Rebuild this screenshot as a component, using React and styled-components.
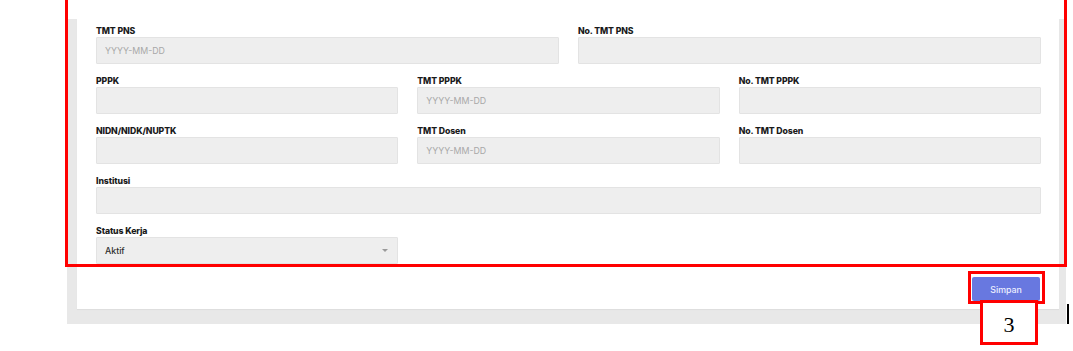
import React from "react";
import styled, { createGlobalStyle } from "styled-components";

const Global = createGlobalStyle`
  html, body { margin: 0; padding: 0; background: #ffffff; }
  body { font-family: Inter, "Open Sans", Arial, sans-serif; }
  * { box-sizing: border-box; }
`;

const Page = styled.div`
  position: relative;
  width: 1073px;
  height: 351px;
  overflow: hidden;
  padding: 19px 0 0 67px;
`;

const Frame = styled.div`
  width: 999px;
  background: #e8e8e8;
  padding: 0 7px 15px 10px;
`;

const Card = styled.div`
  background: #ffffff;
  padding: 6px 18px 8px 19px;
  box-shadow: 0 1px 1px rgba(0, 0, 0, 0.04);
`;

const Row = styled.div`
  display: grid;
  grid-template-columns: repeat(${(p) => p.$cols}, 1fr);
  column-gap: 19px;
  margin-bottom: ${(p) => (p.$last ? 12 : 11)}px;
`;

const Group = styled.div`
  display: flex;
  flex-direction: column;
`;

const Label = styled.label`
  display: block;
  font-size: 8.7px;
  font-weight: 800;
  line-height: 12px;
  color: #1a1a1a;
  letter-spacing: -0.1px;
`;

const Input = styled.input`
  height: 27px;
  width: 100%;
  background: #eeeeee;
  border: 1px solid #e3e3e3;
  border-radius: 1px;
  padding: 0 8px;
  font-family: inherit;
  font-size: 8.8px;
  color: #333;
  outline: none;
  &::placeholder { color: #a8a8a8; }
`;

const Select = styled.div`
  height: 27px;
  width: 100%;
  background: #eeeeee;
  border: 1px solid #e3e3e3;
  border-radius: 1px;
  padding: 0 8px;
  display: flex;
  align-items: center;
  justify-content: space-between;
  font-size: 8.8px;
  font-weight: 500;
  color: #2e2e2e;
`;

const Caret = styled.span`
  width: 0;
  height: 0;
  border-left: 3px solid transparent;
  border-right: 3px solid transparent;
  border-top: 3px solid #9a9a9a;
  margin-right: 1px;
`;

const Footer = styled.div`
  display: flex;
  justify-content: flex-end;
  padding: 1px 1px 0 0;
`;

const Button = styled.button`
  height: 24px;
  width: 68px;
  background: #6878e0;
  color: #eef0ff;
  border: none;
  border-radius: 2px;
  font-family: inherit;
  font-size: 8.8px;
  font-weight: 500;
  cursor: pointer;
`;

const RedBox = styled.div`
  position: absolute;
  border: 3px solid #ff0000;
  pointer-events: none;
  left: ${(p) => p.$x}px;
  top: ${(p) => p.$y}px;
  width: ${(p) => p.$w}px;
  height: ${(p) => p.$h}px;
`;

const Number = styled.div`
  position: absolute;
  left: 980px;
  top: 300px;
  width: 58px;
  height: 45px;
  border: 3px solid #ff0000;
  background: #ffffff;
  display: flex;
  align-items: center;
  justify-content: center;
  font-family: "Liberation Serif", "DejaVu Serif", serif;
  font-size: 22px;
  color: #000;
  padding-top: 4px;
`;

const Cursor = styled.div`
  position: absolute;
  left: 1067px;
  top: 304px;
  width: 2px;
  height: 20px;
  background: #000;
`;

const Field = ({ label, placeholder }) => (
  <Group>
    <Label>{label}</Label>
    <Input placeholder={placeholder} readOnly />
  </Group>
);

export default function App() {
  return (
    <>
      <Global />
      <Page>
        <Frame>
          <Card>
            <Row $cols={2}>
              <Field label="TMT PNS" placeholder="YYYY-MM-DD" />
              <Field label="No. TMT PNS" />
            </Row>
            <Row $cols={3}>
              <Field label="PPPK" />
              <Field label="TMT PPPK" placeholder="YYYY-MM-DD" />
              <Field label="No. TMT PPPK" />
            </Row>
            <Row $cols={3}>
              <Field label="NIDN/NIDK/NUPTK" />
              <Field label="TMT Dosen" placeholder="YYYY-MM-DD" />
              <Field label="No. TMT Dosen" />
            </Row>
            <Row $cols={1}>
              <Field label="Institusi" />
            </Row>
            <Row $cols={3} $last>
              <Group>
                <Label>Status Kerja</Label>
                <Select>
                  <span>Aktif</span>
                  <Caret />
                </Select>
              </Group>
            </Row>
            <Footer>
              <Button>Simpan</Button>
            </Footer>
          </Card>
        </Frame>
        <RedBox $x={65} $y={-10} $w={1002} $h={277} />
        <RedBox $x={968} $y={271} $w={77} $h={33} />
        <Number>3</Number>
        <Cursor />
      </Page>
    </>
  );
}
